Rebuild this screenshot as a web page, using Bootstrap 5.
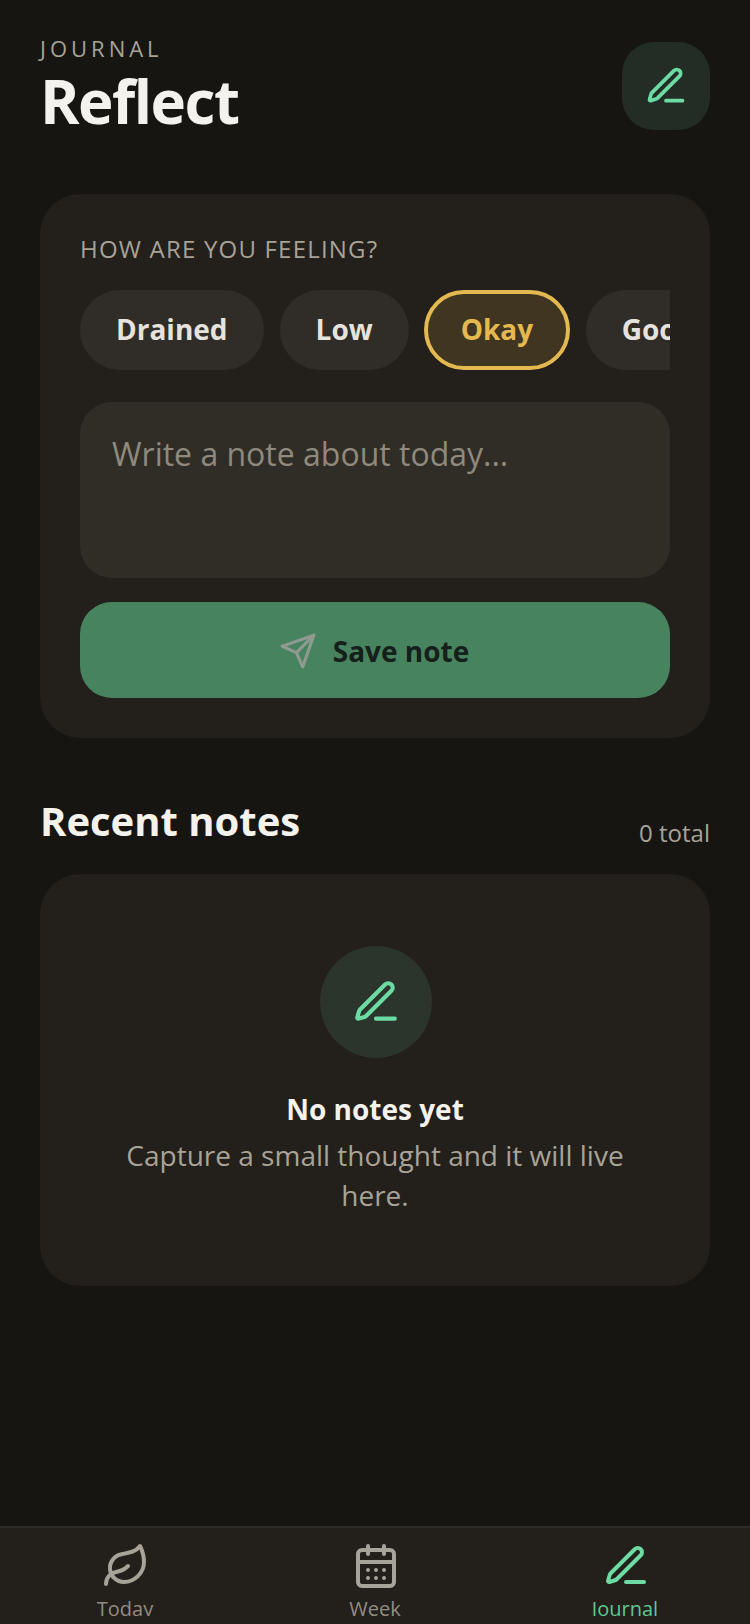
<!DOCTYPE html>
<html lang="en"><head><meta charset="utf-8">
<link rel="stylesheet" href="https://cdn.jsdelivr.net/npm/bootstrap@5.3.0/dist/css/bootstrap.min.css">
<style>
html,body{height:1624px;overflow:hidden}
body{background:#161512;font-family:"Open Sans",sans-serif;color:#f4f2ec}
.app-main{padding:32px 40px 0}
.eyebrow{font-size:22px;line-height:32px;letter-spacing:4px;color:#a8a398}
.page-title{font-size:60px;line-height:64px;font-weight:700;letter-spacing:-1.5px;margin:5px 0 0;color:#f4f2ec}
.icon-tile{width:88px;height:88px;border-radius:32px;background:#232d25;margin-top:10px}
.panel{background:#231f1a;border-radius:40px}
.entry-panel{padding:40px;margin-top:61px}
.mood-label{font-size:24px;line-height:30px;letter-spacing:.05em;color:#a8a398;margin-bottom:26px}
.chips{overflow:hidden;gap:16px}
.chip{flex:none;height:80px;padding:0 36px 2px;border-radius:40px;background:#302c27;color:#e6e3dd;font-size:28px;font-weight:700}
.chip-on{background:#3f3521;color:#e3b950;border:4px solid #e3b950;padding:0 33px 2px;margin:0 -.5px 0 -1px}
.note-box{height:176px;margin-top:32px;background:#302c26;border-radius:32px;padding:32px;font-size:32px;line-height:40px;color:#8f8a7d}
.save-btn{height:96px;margin-top:24px;border-radius:32px;background:#47835f;color:#16201a;font-size:28px;font-weight:700;gap:16px;border:0;padding:2px 2px 0 0}
.save-btn:hover{background:#47835f;color:#16201a}
.sec-head{margin-top:55px;margin-bottom:25px}
.sec-title{font-size:40px;line-height:56px;font-weight:700;margin:0}
.sec-meta{font-size:24px;line-height:32px;color:#a8a398}
.empty-panel{height:412px;padding:72px 60px 0}
.empty-disc{width:112px;height:112px;border-radius:50%;background:#2b352c;margin-left:2px}
.empty-title{font-size:28px;line-height:40px;font-weight:700;color:#f4f2ec;margin-top:31px}
.empty-text{font-size:28px;line-height:40px;color:#a8a398;margin-top:6px}
.tabbar{position:fixed;left:0;right:0;bottom:0;height:98px;background:#231f1a;border-top:2px solid #302c27;overflow:hidden}
.tab-item{flex:1 1 0;font-size:20px;line-height:28px;color:#918c82;padding-top:14px;overflow:hidden}
.tab-item svg{display:block;margin:0 auto;transform:translateX(1px)}
.tab-item span{display:block;height:21px;overflow:hidden;margin-top:5px}
.tab-on{color:#5fc892}
</style></head>
<body>
<main class="app-main">
  <header class="d-flex justify-content-between align-items-start">
    <div><div class="eyebrow">JOURNAL</div><h1 class="page-title">Reflect</h1></div>
    <div class="icon-tile d-flex align-items-center justify-content-center">
      <svg width="44" height="44" viewBox="0 0 24 24" fill="none" stroke="#6cdca4" stroke-width="2" stroke-linecap="round" stroke-linejoin="round"><path d="M12 20h9"/><path d="M16.376 3.622a1 1 0 0 1 3.002 3.002L7.368 18.635a2 2 0 0 1-.855.506l-2.872.838a.5.5 0 0 1-.62-.62l.838-2.872a2 2 0 0 1 .506-.854z"/></svg>
    </div>
  </header>

  <section class="panel entry-panel">
    <div class="mood-label">HOW ARE YOU FEELING?</div>
    <div class="chips d-flex">
      <div class="chip d-flex align-items-center">Drained</div>
      <div class="chip d-flex align-items-center">Low</div>
      <div class="chip chip-on d-flex align-items-center">Okay</div>
      <div class="chip d-flex align-items-center">Good</div>
      <div class="chip d-flex align-items-center">Great</div>
    </div>
    <div class="note-box">Write a note about today...</div>
    <button class="btn save-btn w-100 d-flex align-items-center justify-content-center">
      <svg width="38" height="38" viewBox="0 0 24 24" fill="none" stroke="#8f9a90" stroke-width="2" stroke-linejoin="round" stroke-linecap="round"><path d="m22 2-7 20-4-9-9-4Z"/><path d="M22 2 11 13"/></svg>
      Save note
    </button>
  </section>

  <div class="sec-head d-flex justify-content-between align-items-end">
    <h2 class="sec-title">Recent notes</h2><div class="sec-meta">0 total</div>
  </div>

  <section class="panel empty-panel text-center d-flex flex-column align-items-center">
    <div class="empty-disc d-flex align-items-center justify-content-center">
      <svg width="50" height="50" viewBox="0 0 24 24" fill="none" stroke="#6cdca4" stroke-width="2" stroke-linecap="round" stroke-linejoin="round"><path d="M12 20h9"/><path d="M16.376 3.622a1 1 0 0 1 3.002 3.002L7.368 18.635a2 2 0 0 1-.855.506l-2.872.838a.5.5 0 0 1-.62-.62l.838-2.872a2 2 0 0 1 .506-.854z"/></svg>
    </div>
    <div class="empty-title">No notes yet</div>
    <div class="empty-text">Capture a small thought and it will live here.</div>
  </section>
</main>

<nav class="tabbar d-flex">
  <div class="tab-item text-center">
    <svg width="48" height="48" viewBox="0 0 24 24" fill="none" stroke="#a8a398" stroke-width="2" stroke-linecap="round" stroke-linejoin="round"><path d="M11 20A7 7 0 0 1 9.800 6.100C15.500 5 17 4.480 19 2c1 2 2 4.180 2 8 0 5.500-4.780 10-10 10Z"/><path d="M2 21c0-3 1.850-5.360 5.080-6C9.500 14.520 12 13 13 12"/></svg>
    <span>Today</span>
  </div>
  <div class="tab-item text-center">
    <svg width="48" height="48" viewBox="0 0 24 24" fill="none" stroke="#a8a398" stroke-width="2" stroke-linecap="round" stroke-linejoin="round"><path d="M8 2v4M16 2v4M3 10h18"/><rect x="3" y="4" width="18" height="18" rx="2"/><path d="M8 14h.01M12 14h.01M16 14h.01M8 18h.01M12 18h.01M16 18h.01"/></svg>
    <span>Week</span>
  </div>
  <div class="tab-item tab-on text-center">
    <svg width="48" height="48" viewBox="0 0 24 24" fill="none" stroke="#6cdca4" stroke-width="2" stroke-linecap="round" stroke-linejoin="round"><path d="M12 20h9"/><path d="M16.376 3.622a1 1 0 0 1 3.002 3.002L7.368 18.635a2 2 0 0 1-.855.506l-2.872.838a.5.5 0 0 1-.62-.62l.838-2.872a2 2 0 0 1 .506-.854z"/></svg>
    <span>Journal</span>
  </div>
</nav>
</body></html>
